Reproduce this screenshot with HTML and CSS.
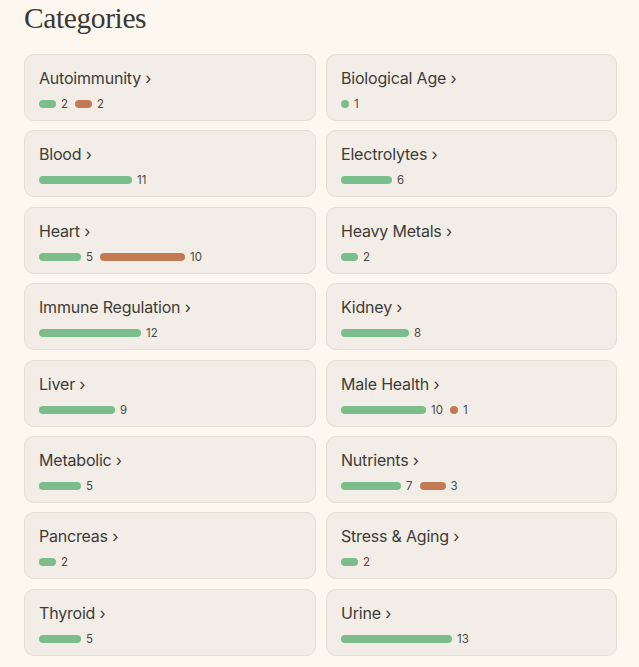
FILE: index.html
```html
<!DOCTYPE html>
<html>
<head>
<meta charset="utf-8">
<link rel="stylesheet" href="styles.css">
</head>
<body>
<h1 class="title">Categories</h1>
<div class="grid">
  <div class="card"><div class="name">Autoimmunity ›</div><div class="stats"><span class="bar good" style="width:17px"></span><span class="num">2</span><span class="bar bad" style="width:17px"></span><span class="num">2</span></div></div>
  <div class="card"><div class="name">Biological Age ›</div><div class="stats"><span class="bar good" style="width:8px"></span><span class="num">1</span></div></div>
  <div class="card"><div class="name">Blood ›</div><div class="stats"><span class="bar good" style="width:93px"></span><span class="num">11</span></div></div>
  <div class="card"><div class="name">Electrolytes ›</div><div class="stats"><span class="bar good" style="width:51px"></span><span class="num">6</span></div></div>
  <div class="card"><div class="name">Heart ›</div><div class="stats"><span class="bar good" style="width:42px"></span><span class="num">5</span><span class="bar bad" style="width:85px"></span><span class="num">10</span></div></div>
  <div class="card"><div class="name">Heavy Metals ›</div><div class="stats"><span class="bar good" style="width:17px"></span><span class="num">2</span></div></div>
  <div class="card"><div class="name">Immune Regulation ›</div><div class="stats"><span class="bar good" style="width:102px"></span><span class="num">12</span></div></div>
  <div class="card"><div class="name">Kidney ›</div><div class="stats"><span class="bar good" style="width:68px"></span><span class="num">8</span></div></div>
  <div class="card"><div class="name">Liver ›</div><div class="stats"><span class="bar good" style="width:76px"></span><span class="num">9</span></div></div>
  <div class="card"><div class="name">Male Health ›</div><div class="stats"><span class="bar good" style="width:85px"></span><span class="num">10</span><span class="bar bad" style="width:8px"></span><span class="num">1</span></div></div>
  <div class="card"><div class="name">Metabolic ›</div><div class="stats"><span class="bar good" style="width:42px"></span><span class="num">5</span></div></div>
  <div class="card"><div class="name">Nutrients ›</div><div class="stats"><span class="bar good" style="width:60px"></span><span class="num">7</span><span class="bar bad" style="width:26px"></span><span class="num">3</span></div></div>
  <div class="card"><div class="name">Pancreas ›</div><div class="stats"><span class="bar good" style="width:17px"></span><span class="num">2</span></div></div>
  <div class="card"><div class="name">Stress &amp; Aging ›</div><div class="stats"><span class="bar good" style="width:17px"></span><span class="num">2</span></div></div>
  <div class="card"><div class="name">Thyroid ›</div><div class="stats"><span class="bar good" style="width:42px"></span><span class="num">5</span></div></div>
  <div class="card"><div class="name">Urine ›</div><div class="stats"><span class="bar good" style="width:111px"></span><span class="num">13</span></div></div>
</div>
</body>
</html>
```
FILE: styles.css
```css
html, body {
  margin: 0;
  padding: 0;
  background: #fcf8ef;
}
body {
  padding: 0 22px 0 24px;
  font-family: Inter, "Noto Sans", sans-serif;
  color: #383633;
}
.title {
  margin: 0 0 18px 0;
  font-family: "Liberation Serif", serif;
  font-weight: 400;
  font-size: 29.5px;
  line-height: 36px;
  letter-spacing: -0.4px;
  color: #3a3835;
}
.grid {
  width: 593px;
  display: grid;
  grid-template-columns: 292px 291px;
  column-gap: 10px;
  row-gap: 9.4px;
}
.card {
  background: #f2eee7;
  border: 1px solid #e3ddd2;
  border-radius: 10px;
  padding: 12px 14px 9px 14px;
}
.name {
  font-size: 16px;
  line-height: 22px;
  letter-spacing: -0.2px;
  color: #3d3b38;
  margin-bottom: 8px;
}
.stats {
  display: flex;
  align-items: center;
  height: 14px;
}
.bar {
  display: block;
  height: 8px;
  border-radius: 4px;
  margin-right: 5px;
}
.bar.good { background: #7bbd8b; }
.bar.bad { background: #c47955; }
.num {
  font-size: 11.5px;
  line-height: 14px;
  color: #4a4845;
  margin-right: 7px;
}
```
